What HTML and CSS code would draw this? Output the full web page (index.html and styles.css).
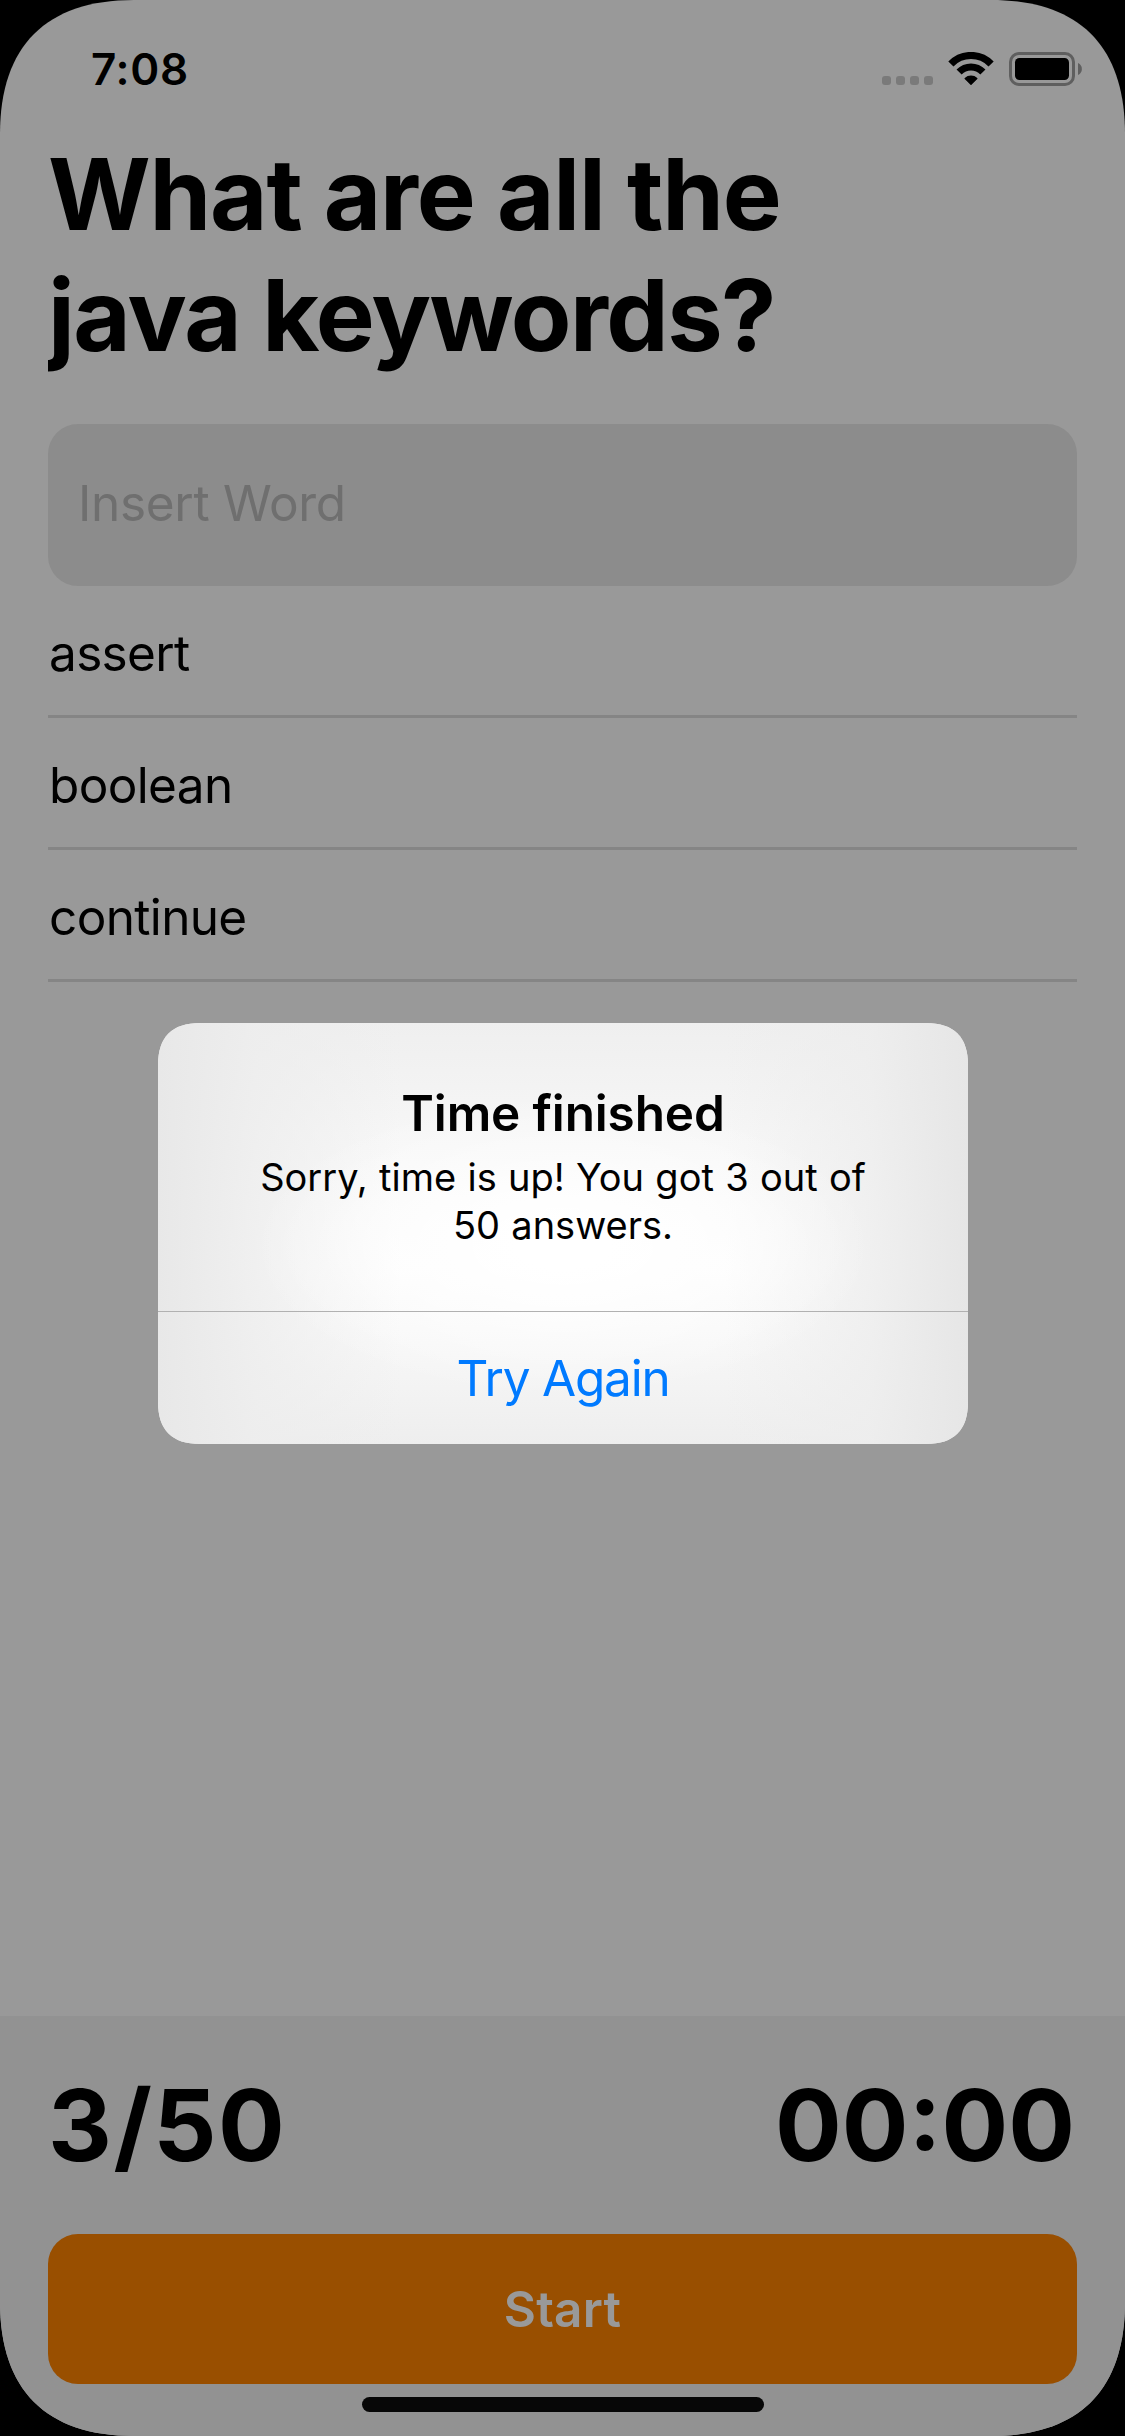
FILE: index.html
```html
<!DOCTYPE html>
<html lang="en">
<head>
<meta charset="utf-8">
<title>Keywords quiz</title>
<link rel="stylesheet" href="styles.css">
</head>
<body>
<div class="phone">
  <header class="status">
    <span class="status-time">7:08</span>
    <div class="status-icons">
      <div class="dots"><i></i><i></i><i></i><i></i></div>
      <svg class="wifi" viewBox="0 0 46 34" width="46" height="34" fill="none" stroke="#000">
        <path d="M2.9 12A28 28 0 0 1 43.1 12" stroke-width="7.2"/>
        <path d="M11.1 20A16.7 16.7 0 0 1 34.9 20" stroke-width="7.2"/>
        <path d="M23 32.2L17.2 26.5A8.6 8.6 0 0 1 28.8 26.5Z" fill="#000" stroke-width="1.4" stroke-linejoin="round"/>
      </svg>
      <svg class="battery" viewBox="0 0 74 34" width="74" height="34">
        <rect x="1.5" y="1.5" width="63" height="31" rx="8.5" fill="none" stroke="#5f5f5f" stroke-width="3"/>
        <rect x="6" y="6" width="54" height="22" rx="4.5" fill="#000"/>
        <path d="M69 11a6.6 6.6 0 0 1 0 12Z" fill="#5f5f5f"/>
      </svg>
    </div>
  </header>

  <main class="content">
    <h1 class="title">What are all the<br><span class="title-end">java keywords?</span></h1>
    <div class="field">Insert Word</div>
    <ul class="words">
      <li>assert</li>
      <li>boolean</li>
      <li>continue</li>
    </ul>
  </main>

  <footer class="footer">
    <div class="counters">
      <span class="score">3/50</span>
      <span class="timer">00:00</span>
    </div>
    <button class="start">Start</button>
    <div class="home-indicator"></div>
  </footer>

  <div class="overlay">
    <section class="alert" role="alertdialog">
      <div class="alert-body">
        <h2>Time finished</h2>
        <p>Sorry, time is up! You got 3 out of<br>50 answers.</p>
      </div>
      <button class="alert-action">Try Again</button>
    </section>
  </div>
</div>
</body>
</html>
```
FILE: styles.css
```css
* { box-sizing: border-box; }

body {
  margin: 0;
  background: #000;
  font-family: Inter, "Liberation Sans", sans-serif;
  color: #000;
}

.phone {
  position: relative;
  display: flex;
  flex-direction: column;
  width: 1125px;
  height: 2436px;
  overflow: hidden;
  background: #999;
  clip-path: path("M0 134C0 46 46 0 134 0H991C1079 0 1125 46 1125 134V2302C1125 2390 1079 2436 991 2436H134C46 2436 0 2390 0 2302Z");
}

/* Status bar */
.status {
  display: flex;
  justify-content: space-between;
  align-items: flex-start;
  height: 132px;
  padding: 52px 42px 0 91px;
}

.status-time {
  margin-top: -10px;
  font-size: 44px;
  line-height: 54px;
  font-weight: 600;
  letter-spacing: 0.7px;
}

.status-icons { display: flex; align-items: flex-start; }

.dots { display: flex; gap: 5px; margin: 24px 15px 0 0; }

.dots i {
  width: 9px;
  height: 9px;
  border-radius: 3px;
  background: #7a7a7a;
}

.wifi { display: block; margin-right: 15px; }
.battery { display: block; }

/* Question and answers */
.content { flex: 1; padding: 2px 48px 0; }

.title {
  margin: 0 0 48px;
  overflow: hidden;
  font-size: 99px;
  line-height: 121px;
  font-weight: 700;
  letter-spacing: -1.15px;
}

.title-end { letter-spacing: -1.55px; }

.field {
  height: 162px;
  padding: 0 30px;
  border-radius: 30px;
  background: #8c8c8c;
  color: #6f6f6f;
  font-size: 49.5px;
  line-height: 158px;
  letter-spacing: -0.3px;
}

.words { margin: 0; padding: 0; list-style: none; }

.words li {
  height: 132px;
  padding-left: 1px;
  border-bottom: 3px solid #858585;
  font-size: 49.5px;
  line-height: 134px;
  letter-spacing: -0.65px;
}

/* Bottom panel */
.footer {
  display: flex;
  flex-direction: column;
  height: 420px;
  padding: 48px 48px 0;
  background: #929292;
}

.counters {
  display: flex;
  justify-content: space-between;
  height: 170px;
  font-size: 99px;
  line-height: 122px;
  font-weight: 700;
}

.score { letter-spacing: 1.5px; }
.timer { margin-right: 2px; }

.start {
  flex: none;
  height: 150px;
  margin: 0;
  padding: 0;
  border: 0;
  border-radius: 30px;
  background: #994f00;
  color: #999;
  font: 600 49.5px/150px Inter, "Liberation Sans", sans-serif;
  letter-spacing: 0.25px;
}

.home-indicator {
  flex: none;
  align-self: center;
  width: 402px;
  height: 15px;
  margin-top: 13px;
  border-radius: 8px;
  background: #070707;
}

/* Alert */
.overlay {
  position: absolute;
  inset: 0;
  display: flex;
  align-items: center;
  justify-content: center;
  padding: 31px 0 0 1px;
}

.alert {
  display: flex;
  flex-direction: column;
  width: 810px;
  height: 421px;
  text-align: center;
  background:
    radial-gradient(ellipse 310px 150px at 50% 53%, #fff 15%, rgba(255, 255, 255, 0) 100%),
    linear-gradient(90deg, #e8e8e8 0, rgba(237, 237, 237, 0.8) 12%, rgba(246, 246, 246, 0) 30%, rgba(246, 246, 246, 0) 70%, rgba(237, 237, 237, 0.8) 88%, #e6e6e6 100%),
    linear-gradient(#efefef 0, #f3f3f3 15%, #f6f6f6 25%, #fafafa 42%, #fcfcfc 58%, #f7f7f7 76%, #eee 100%);
  clip-path: path("M0 42C0 14 14 0 42 0H768C796 0 810 14 810 42V379C810 407 796 421 768 421H42C14 421 0 407 0 379Z");
}

.alert-body {
  height: 289px;
  padding-top: 60px;
  border-bottom: 1px solid #b1b1b1;
}

.alert h2 {
  margin: 0 0 10px;
  font-size: 49.5px;
  line-height: 60px;
  font-weight: 600;
  letter-spacing: -0.15px;
}

.alert p {
  margin: 0;
  font-size: 38px;
  line-height: 48px;
  word-spacing: 0.6px;
}

.alert-action {
  flex: 1;
  padding: 0;
  border: 0;
  background: none;
  color: #007aff;
  font: 400 49.5px/60px Inter, "Liberation Sans", sans-serif;
  letter-spacing: -1.2px;
}
```
